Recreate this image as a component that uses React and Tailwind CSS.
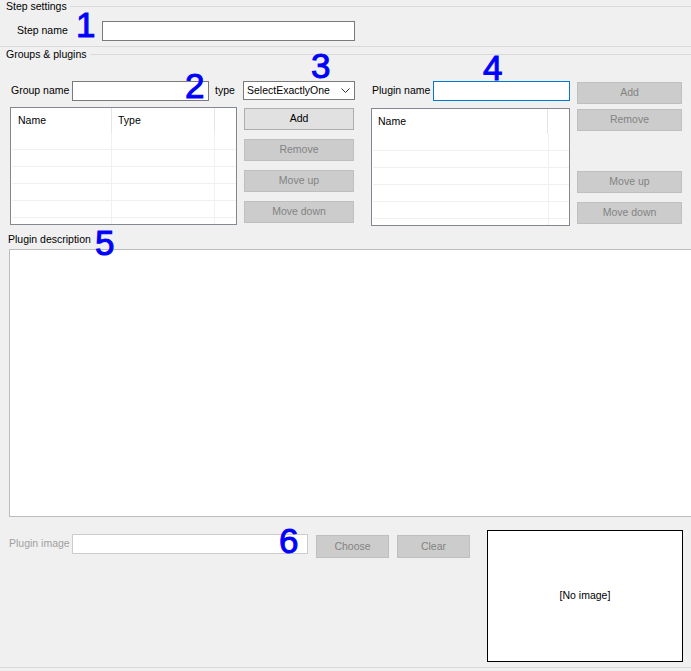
import React from 'react';

const btnOn = 'flex items-center justify-center h-[22px] border border-[#adadad] bg-[#e1e1e1] text-black';
const btnOff = 'flex items-center justify-center h-[22px] border border-[#bfbfbf] bg-[#cccccc] text-[#838383]';

function Marker({ n, className }) {
  return (
    <span className={`absolute font-['Liberation_Sans',Arial,sans-serif] text-[35px] leading-[35px] text-[#0000ff] [-webkit-text-stroke:1px_#0000ff] ${className}`}>
      {n}
    </span>
  );
}

function GroupTitle({ title, className = '' }) {
  return (
    <div className={`flex h-[12px] pl-[6px] ${className}`}>
      <span className="leading-[12px] pr-[3px] whitespace-nowrap">{title}</span>
      <div className="flex-1 self-start mt-[6px] h-px bg-[#d9d9d9]" />
    </div>
  );
}

function ListBox({ width, cols, rows = 5 }) {
  return (
    <div className={`flex flex-col h-[118px] border border-[#828790] bg-white overflow-hidden ${width}`}>
      <div className="flex h-[25px] shrink-0">
        {cols.map((c, i) => (
          <div key={i} className={`flex items-center border-r border-[#e5e5e5] ${c.w} ${c.pad}`}>
            {c.label}
          </div>
        ))}
        <div className="flex-1" />
      </div>
      {Array.from({ length: rows }).map((_, r) => (
        <div key={r} className="flex h-[17px] shrink-0 border-b border-[#f0f0f0] ml-[1px]">
          {cols.map((c, i) => (
            <div key={i} className={`border-r border-[#f0f0f0] ${c.bw}`} />
          ))}
          <div className="flex-1" />
        </div>
      ))}
      <div className="flex flex-1 ml-[1px]">
        {cols.map((c, i) => (
          <div key={i} className={`border-r border-[#f0f0f0] ${c.bw}`} />
        ))}
      </div>
    </div>
  );
}

export default function App() {
  return (
    <div className="relative w-[691px] h-[671px] overflow-hidden bg-[#f0f0f0] text-[10.5px] text-black whitespace-nowrap font-['Liberation_Sans',Arial,sans-serif]">
      {/* Step settings */}
      <GroupTitle title="Step settings" />
      <div className="flex items-center h-[20px] mt-[9px]">
        <span className="w-[102px] pl-[17px] shrink-0">Step name</span>
        <div className="w-[253px] h-[20px] border border-[#7a7a7a] bg-white" />
      </div>
      <div className="mt-[5px] h-px bg-[#d9d9d9]" />

      {/* Groups & plugins */}
      <GroupTitle title="Groups & plugins" className="mt-[1px]" />
      <div className="flex mt-[20px]">
        {/* groups */}
        <div className="ml-[10px] w-[345px] shrink-0">
          <div className="flex items-center h-[21px]">
            <span className="w-[62px] pl-[1px] shrink-0">Group name</span>
            <div className="w-[137px] h-[20px] border border-[#7a7a7a] bg-white shrink-0" />
            <span className="ml-[6px] w-[28px] shrink-0">type</span>
            <div className="flex items-center justify-between w-[112px] h-[19px] border border-[#7a7a7a] bg-white pl-[3px] pr-[4px] shrink-0">
              <span>SelectExactlyOne</span>
              <svg width="9" height="5" viewBox="0 0 9 5" fill="none" stroke="#333" strokeWidth="1">
                <polyline points="0.5,0.5 4.5,4.5 8.5,0.5" />
              </svg>
            </div>
          </div>
          <div className="flex mt-[6px]">
            <ListBox
              width="w-[227px]"
              cols={[
                { label: 'Name', w: 'w-[101px]', bw: 'w-[100px]', pad: 'pl-[7px]' },
                { label: 'Type', w: 'w-[103px]', bw: 'w-[103px]', pad: 'pl-[6px]' },
              ]}
            />
            <div className="flex flex-col gap-[9px] ml-[7px] mt-px w-[110px]">
              <div className={btnOn}>Add</div>
              <div className={btnOff}>Remove</div>
              <div className={btnOff}>Move up</div>
              <div className={btnOff}>Move down</div>
            </div>
          </div>
        </div>

        {/* plugins */}
        <div className="flex ml-[16px] shrink-0">
          <div className="w-[199px]">
            <div className="flex items-center h-[20px] mt-px">
              <span className="w-[62px] pl-[1px] shrink-0">Plugin name</span>
              <div className="w-[137px] h-[20px] border border-[#0078d7] bg-white shrink-0" />
            </div>
            <div className="mt-[7px]">
              <ListBox
                width="w-[199px]"
                cols={[{ label: 'Name', w: 'w-[176px]', bw: 'w-[176px]', pad: 'pl-[6px]' }]}
              />
            </div>
          </div>
          <div className="flex flex-col ml-[7px] mt-[2px] w-[105px]">
            <div className={btnOff}>Add</div>
            <div className={`${btnOff} mt-[5px]`}>Remove</div>
            <div className={`${btnOff} mt-[40px]`}>Move up</div>
            <div className={`${btnOff} mt-[9px]`}>Move down</div>
          </div>
        </div>
      </div>

      {/* Plugin description */}
      <div className="mt-[7px] pl-[8px] h-[12px] leading-[12px]">Plugin description</div>
      <div className="ml-[9px] mt-[4px] w-[700px] h-[268px] border border-[#bcbcbc] bg-white" />

      {/* Plugin image */}
      <div className="flex mt-[13px]">
        <div className="flex items-start pl-[9px] mt-[4px]">
          <span className="w-[63px] h-[20px] flex items-center text-[#a0a0a0] shrink-0">Plugin image</span>
          <div className="w-[236px] h-[20px] border border-[#cccccc] bg-white shrink-0" />
          <div className={`${btnOff} ml-[8px] mt-px w-[73px] h-[23px] shrink-0`}>Choose</div>
          <div className={`${btnOff} ml-[8px] mt-px w-[73px] h-[23px] shrink-0`}>Clear</div>
        </div>
        <div className="flex items-center justify-center ml-[17px] w-[196px] h-[132px] border border-black bg-white shrink-0">
          [No image]
        </div>
      </div>
      <div className="mt-[5px] h-px bg-[#d9d9d9]" />

      {/* annotation numbers */}
      <Marker n="1" className="left-[76px] top-[7px]" />
      <Marker n="2" className="left-[185px] top-[68px]" />
      <Marker n="3" className="left-[311px] top-[48px]" />
      <Marker n="4" className="left-[483px] top-[50px]" />
      <Marker n="5" className="left-[95px] top-[225px]" />
      <Marker n="6" className="left-[279px] top-[523px]" />
    </div>
  );
}
